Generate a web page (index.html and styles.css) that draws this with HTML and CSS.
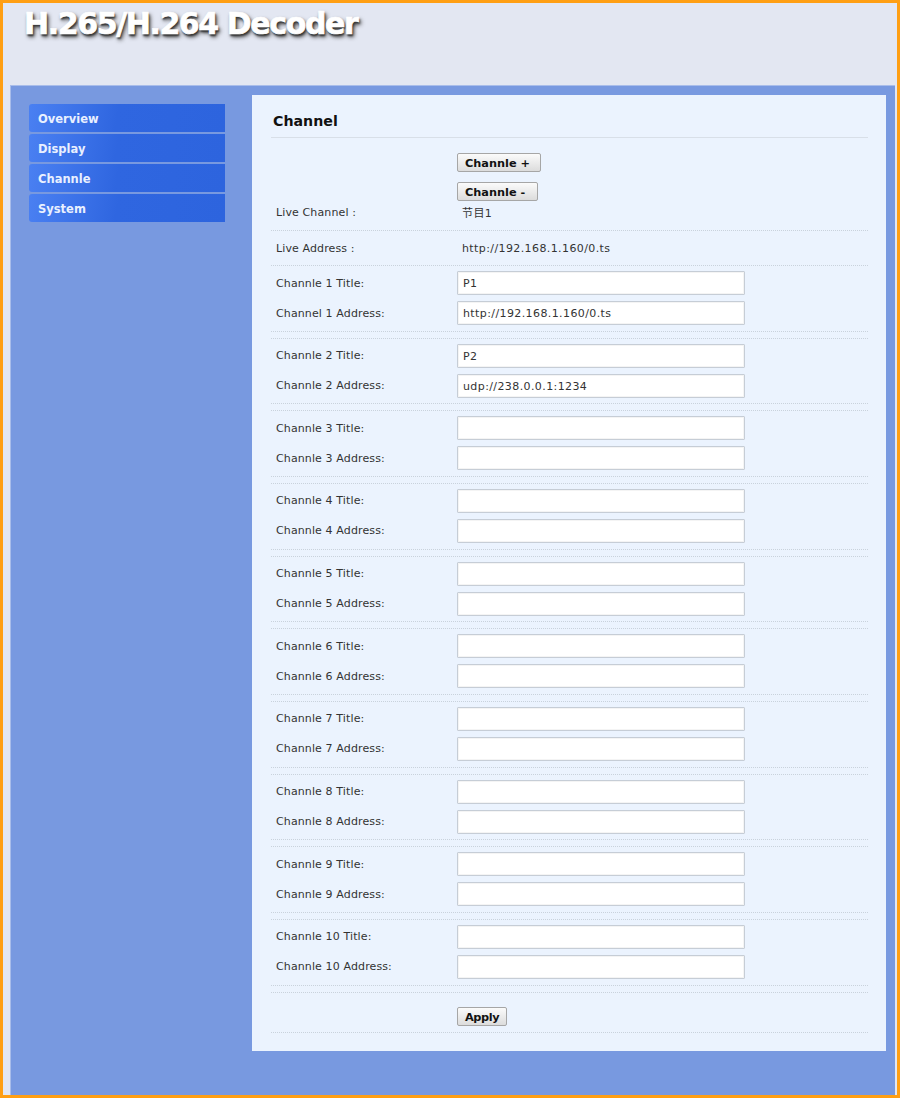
FILE: index.html
```html
<!DOCTYPE html>
<html lang="en">
<head>
<meta charset="utf-8">
<title>H.265/H.264 Decoder</title>
<link rel="stylesheet" href="styles.css">
</head>
<body>
<div class="page">
  <header class="header"><h1 class="logo">H.265/H.264 Decoder</h1></header>
  <div class="main">
    <nav class="nav">
      <a class="nav-item">Overview</a>
      <a class="nav-item">Display</a>
      <a class="nav-item">Channle</a>
      <a class="nav-item">System</a>
    </nav>
    <section class="panel">
      <h2 class="title">Channel</h2>
      <div class="live">
        <div class="buttons">
          <button class="btn">Channle +</button>
          <button class="btn btn-minus">Channle -</button>
        </div>
        <div class="row live-row"><span class="label">Live Channel :</span><span class="value">节目1</span></div>
      </div>
      <div class="row address-row"><span class="label">Live Address :</span><span class="value">http://192.168.1.160/0.ts</span></div>
      <div class="group">
        <div class="row"><label class="label">Channle 1 Title:</label><input class="input" value="P1"></div>
        <div class="row"><label class="label">Channel 1 Address:</label><input class="input" value="http://192.168.1.160/0.ts"></div>
      </div>
      <div class="spacer"></div>
      <div class="group">
        <div class="row"><label class="label">Channle 2 Title:</label><input class="input" value="P2"></div>
        <div class="row"><label class="label">Channle 2 Address:</label><input class="input" value="udp://238.0.0.1:1234"></div>
      </div>
      <div class="spacer"></div>
      <div class="group">
        <div class="row"><label class="label">Channle 3 Title:</label><input class="input"></div>
        <div class="row"><label class="label">Channle 3 Address:</label><input class="input"></div>
      </div>
      <div class="spacer"></div>
      <div class="group">
        <div class="row"><label class="label">Channle 4 Title:</label><input class="input"></div>
        <div class="row"><label class="label">Channle 4 Address:</label><input class="input"></div>
      </div>
      <div class="spacer"></div>
      <div class="group">
        <div class="row"><label class="label">Channle 5 Title:</label><input class="input"></div>
        <div class="row"><label class="label">Channle 5 Address:</label><input class="input"></div>
      </div>
      <div class="spacer"></div>
      <div class="group">
        <div class="row"><label class="label">Channle 6 Title:</label><input class="input"></div>
        <div class="row"><label class="label">Channle 6 Address:</label><input class="input"></div>
      </div>
      <div class="spacer"></div>
      <div class="group">
        <div class="row"><label class="label">Channle 7 Title:</label><input class="input"></div>
        <div class="row"><label class="label">Channle 7 Address:</label><input class="input"></div>
      </div>
      <div class="spacer"></div>
      <div class="group">
        <div class="row"><label class="label">Channle 8 Title:</label><input class="input"></div>
        <div class="row"><label class="label">Channle 8 Address:</label><input class="input"></div>
      </div>
      <div class="spacer"></div>
      <div class="group">
        <div class="row"><label class="label">Channle 9 Title:</label><input class="input"></div>
        <div class="row"><label class="label">Channle 9 Address:</label><input class="input"></div>
      </div>
      <div class="spacer"></div>
      <div class="group">
        <div class="row"><label class="label">Channle 10 Title:</label><input class="input"></div>
        <div class="row"><label class="label">Channle 10 Address:</label><input class="input"></div>
      </div>
      <div class="spacer"></div>
      <div class="apply"><button class="btn btn-apply">Apply</button></div>
    </section>
  </div>
</div>
</body>
</html>
```
FILE: styles.css
```css
* { box-sizing: border-box; }
html, body { margin: 0; padding: 0; }
body {
  font-family: "DejaVu Sans", "Noto Sans CJK SC", sans-serif;
  font-size: 11px;
  color: #333;
}
.page {
  height: 1098px;
  border: 3px solid #ff9f14;
  background: #e3e7f2;
  display: flex;
  flex-direction: column;
  overflow: hidden;
}
.header { height: 82px; padding: 0 0 0 21px; flex: none; }
.logo {
  margin: 0;
  font-size: 30px;
  line-height: 42px;
  font-weight: bold;
  letter-spacing: -1.4px;
  color: #fff;
  -webkit-text-stroke: 0.7px #fff;
  text-shadow: 1px 2px 2px #333, 2px 3px 4px #444;
}
.main {
  flex: 1;
  margin: 0 2px 0 7px;
  padding: 10px 9px 0 19px;
  background: #7899e0;
  display: flex;
  align-items: flex-start;
  border-top: 1px solid #a9bdea;
  border-left: 1px solid #a9bdea;
}
.nav { width: 196px; margin-top: 8px; margin-left: -1px; display: flex; flex-direction: column; gap: 2px; flex: none; }
.nav-item {
  height: 28px;
  line-height: 30px;
  padding-left: 9px;
  font-size: 11.5px;
  font-weight: bold;
  color: #e9f0ff;
  background: linear-gradient(100deg, #4a80f2 0%, #2f66e0 45%, #2d64de 100%);
  border-radius: 3px 0 0 3px;
}
.panel {
  width: 634px;
  height: 956px;
  margin-left: 27px;
  margin-top: -1px;
  padding: 0 18px 0 19px;
  background: #ebf3fe;
  flex: none;
}
.title {
  margin: 0;
  height: 43px;
  padding: 17px 0 0 2px;
  font-size: 14.2px;
  line-height: 18px;
  font-weight: bold;
  color: #111;
  border-bottom: 1px solid #d8dfe8;
}
.live { height: 93px; padding-top: 15px; border-bottom: 1px dotted #c9d2dc; }
.buttons { padding-left: 186px; display: flex; flex-direction: column; align-items: flex-start; gap: 10px; }
.btn {
  height: 19px;
  padding: 1px 10px 0 7px;
  font-family: "DejaVu Sans", sans-serif;
  font-size: 11.3px;
  font-weight: bold;
  line-height: 17px;
  color: #111;
  background: linear-gradient(#fbfbfb, #dcdcdc);
  border: 1px solid #a6a6a6;
  border-radius: 2px;
}
.btn-minus { padding-right: 12px; }
.btn-apply { padding-right: 7px; letter-spacing: -0.4px; }
.row { display: flex; align-items: center; height: 24px; }
.live-row { height: 22px; }
.address-row { height: 35px; padding-top: 1px; border-bottom: 1px dotted #c9d2dc; }
.label { width: 186px; padding-left: 5px; flex: none; letter-spacing: 0.12px; }
.value { padding-left: 5px; letter-spacing: 0.4px; }
.group {
  padding: 5px 0 5.63px;
  display: flex;
  flex-direction: column;
  gap: 6px;
  border-bottom: 1px dotted #c9d2dc;
}
.spacer { height: 7.04px; border-bottom: 1px dotted #c9d2dc; }
.input {
  width: 288px;
  height: 24px;
  padding: 1px 5px 0;
  font-family: "DejaVu Sans", sans-serif;
  font-size: 11px;
  letter-spacing: 0.4px;
  color: #333;
  background: #fff;
  border: 1px solid #c6cdd6;
  border-radius: 1px;
  box-shadow: inset 0 0 0 1px #f4f4f4;
  outline: none;
}
.apply { height: 40px; padding: 14px 0 0 186px; border-bottom: 1px dotted #c9d2dc; }
```
